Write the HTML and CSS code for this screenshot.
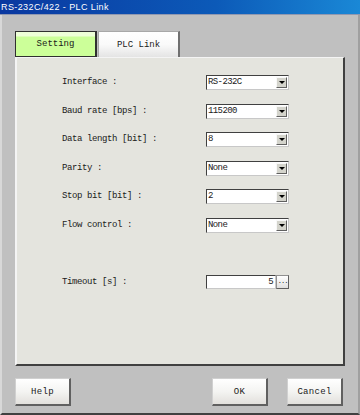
FILE: index.html
```html
<!DOCTYPE html>
<html>
<head>
<meta charset="utf-8">
<link rel="stylesheet" href="styles.css">
</head>
<body>
<div class="window">
  <div class="titlebar">RS-232C/422 - PLC Link</div>
  <div class="content">
    <div class="tabs">
      <div class="tab active">Setting</div>
      <div class="tab">PLC Link</div>
    </div>
    <div class="panel">
      <div class="form">
        <div class="label">Interface :</div>
        <div class="select"><span class="val">RS-232C</span><span class="arrow"></span></div>
        <div class="label">Baud rate [bps] :</div>
        <div class="select"><span class="val">115200</span><span class="arrow"></span></div>
        <div class="label">Data length [bit] :</div>
        <div class="select"><span class="val">8</span><span class="arrow"></span></div>
        <div class="label">Parity :</div>
        <div class="select"><span class="val">None</span><span class="arrow"></span></div>
        <div class="label">Stop bit [bit] :</div>
        <div class="select"><span class="val">2</span><span class="arrow"></span></div>
        <div class="label">Flow control :</div>
        <div class="select"><span class="val">None</span><span class="arrow"></span></div>
      </div>
      <div class="form timeout">
        <div class="label">Timeout [s] :</div>
        <div class="numfield"><span class="num">5</span><span class="dots">...</span></div>
      </div>
    </div>
    <div class="buttons">
      <div class="btn">Help</div>
      <div class="spacer"></div>
      <div class="btn">OK</div>
      <div class="btn">Cancel</div>
    </div>
  </div>
</div>
</body>
</html>
```
FILE: styles.css
```css
* { box-sizing: border-box; }
html, body { margin: 0; padding: 0; }
body {
  width: 360px;
  height: 415px;
  overflow: hidden;
  background: #c0c0c0;
  font-family: "Liberation Mono", "DejaVu Sans Mono", monospace;
  font-size: 9px;
  letter-spacing: -0.4px;
  color: #1a1a1a;
}
.window {
  width: 360px;
  height: 415px;
  background: #c0c0c0;
  border-left: 2px solid #d8d8d8;
  border-right: 2px solid #a0a0a0;
  border-bottom: 2px solid #404040;
  display: flex;
  flex-direction: column;
}
.titlebar {
  height: 15px;
  margin-left: -2px;
  margin-right: -2px;
  background: linear-gradient(to right, #0a38a0 0%, #0c5ab8 60%, #1a88d6 100%);
  color: #fff;
  font-family: "Liberation Sans", Arial, sans-serif;
  font-size: 9px;
  line-height: 14px;
  padding-left: 1px;
  border-bottom: 1px solid #9098b0;
  letter-spacing: 0.4px;
}
.content {
  flex: 1;
  padding: 16px 13px 0 13px;
  display: flex;
  flex-direction: column;
}
.tabs {
  display: flex;
  height: 26px;
  gap: 1px;
}
.tab {
  width: 82px;
  height: 26px;
  display: flex;
  align-items: center;
  justify-content: center;
  letter-spacing: 0px;
  background: linear-gradient(#ffffff 0%, #fafafa 50%, #e4e4e4 100%);
  border: 1px solid #a8a8a8;
  border-right: 2px solid #707070;
  border-bottom: none;
}
.tab.active {
  background: linear-gradient(#eeffd8 0px, #eeffd8 4px, #ccff99 5px, #ccff99 100%);
  border: 1px solid #303030;
  border-right: 2px solid #303030;
  border-bottom: 1px solid #303030;
}
.panel {
  height: 309px;
  background: #e4e4de;
  border-left: 2px solid #f4f4f4;
  border-top: 1px solid #f4f4f4;
  border-right: 2px solid #404040;
  border-bottom: 2px solid #404040;
  padding: 17px 0 0 45px;
}
.form {
  display: grid;
  grid-template-columns: 144px 83px;
  row-gap: 13.6px;
}
.form.timeout {
  margin-top: 42px;
}
.label {
  height: 15px;
  line-height: 15px;
  white-space: nowrap;
}
.select {
  height: 15px;
  background: #fff;
  border-top: 1px solid #404040;
  border-left: 1px solid #404040;
  border-right: 1px solid #c8c8c8;
  border-bottom: 1px solid #c8c8c8;
  display: flex;
  align-items: center;
  padding: 1px;
}
.select .val {
  flex: 1;
  line-height: 11px;
  letter-spacing: -0.6px;
}
.select .arrow {
  width: 11px;
  height: 11px;
  background: #d4d4cc;
  border-top: 1px solid #f8f8f8;
  border-left: 1px solid #f8f8f8;
  border-right: 1px solid #606060;
  border-bottom: 1px solid #606060;
  display: flex;
  align-items: center;
  justify-content: center;
}
.select .arrow::after {
  content: "";
  width: 0;
  height: 0;
  border-left: 3px solid transparent;
  border-right: 3px solid transparent;
  border-top: 3px solid #000;
}
.numfield {
  display: flex;
  height: 14px;
}
.num {
  width: 71px;
  height: 14px;
  background: #fff;
  border-top: 1px solid #404040;
  border-left: 1px solid #404040;
  border-right: 1px solid #c8c8c8;
  border-bottom: 1px solid #c8c8c8;
  text-align: right;
  padding-right: 2px;
  line-height: 12px;
}
.dots {
  width: 13px;
  height: 14px;
  background: linear-gradient(#ffffff, #e0e0e0);
  border: 1px solid #909090;
  border-right-color: #606060;
  border-bottom-color: #606060;
  font-size: 7px;
  line-height: 11px;
  text-align: center;
  letter-spacing: -1px;
}
.buttons {
  display: flex;
  margin-top: 12px;
  gap: 19px;
  padding-right: 2px;
}
.spacer { flex: 1; }
.btn {
  width: 56px;
  height: 28px;
  display: flex;
  align-items: center;
  justify-content: center;
  background: linear-gradient(#ffffff 0%, #f4f4f2 50%, #e2e0dc 100%);
  border-top: 1px solid #d0d0d0;
  border-left: 1px solid #d0d0d0;
  border-right: 2px solid #606060;
  border-bottom: 2px solid #606060;
  letter-spacing: 0.3px;
}
```
